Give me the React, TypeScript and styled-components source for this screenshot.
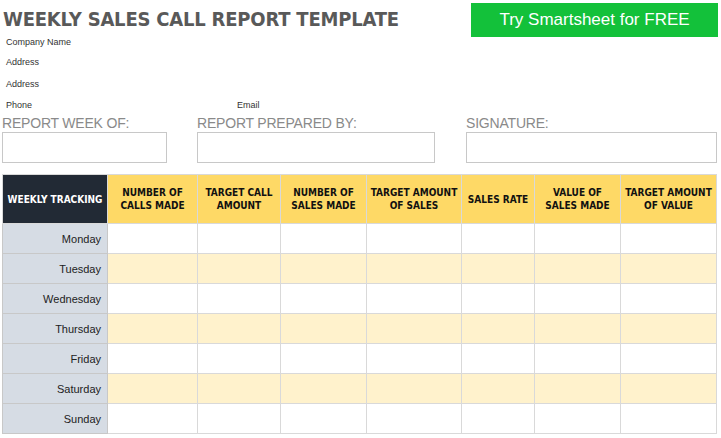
import React from "react";
import styled, { createGlobalStyle } from "styled-components";

const G = createGlobalStyle`
  body { margin: 0; background: #fff; font-family: "DejaVu Sans Condensed", "Liberation Sans", sans-serif; }
`;
const Page = styled.div`width: 721px; height: 438px; position: relative; overflow: hidden;`;
const Top = styled.div`display: flex; justify-content: space-between; padding: 3px 3px 0 3px;`;
const Title = styled.div`font-weight: bold; font-size: 20px; color: #595959; padding-top: 4px; letter-spacing: -0.2px;`;
const Btn = styled.div`
  width: 247px; height: 34px; background: #13c13a; color: #fff; font-family: "Liberation Sans", sans-serif;
  font-size: 17px; display: flex; align-items: center; justify-content: center;
`;
const Info = styled.div`font-family: "Liberation Sans", sans-serif; font-size: 9px; color: #333; height: 9px; margin-left: 6px;`;
const InfoBlock = styled.div`display: flex; flex-direction: column; gap: 11px; padding-top: 1px;`;
const PhoneRow = styled.div`display: flex; font-family: "Liberation Sans", sans-serif; font-size: 9px; color: #333; padding-left: 6px; span:first-child { width: 231px; }`;
const Fields = styled.div`display: flex; margin-top: 5px; padding-left: 2px;`;
const Field = styled.div<{ $w: number; $gap: number }>`width: ${p => p.$w}px; margin-right: ${p => p.$gap}px;`;
const Label = styled.div`font-family: "Liberation Sans", sans-serif; font-size: 14px; color: #8a8a8a; height: 16px; line-height: 16px; letter-spacing: -0.2px;`;
const Box = styled.div`height: 29px; border: 1px solid #c8c8c8; margin-top: 1px;`;
const Table = styled.table`border-collapse: collapse; margin: 11px 0 0 2px; table-layout: fixed;`;
const Th = styled.th<{ $dark?: boolean }>`
  height: 49px; box-sizing: border-box; background: ${p => (p.$dark ? "#222a35" : "#fed966")}; color: ${p => (p.$dark ? "#fff" : "#111")};
  font-size: 10px; font-weight: bold; border: 1px solid #d9d9d9; padding: 0 2px; line-height: 13px; text-align: center;
`;
const Day = styled.td`height: 30px; box-sizing: border-box; padding: 0 6px 0 0; background: #d6dce4; text-align: right; font-family: "Liberation Sans", sans-serif; font-size: 11px; color: #222; border: 1px solid #c8c8c8;`;
const Td = styled.td<{ $alt: boolean }>`padding: 0; background: ${p => (p.$alt ? "#fff2cc" : "#fff")}; border: 1px solid #d9d9d9;`;

const cols = [105, 90, 83, 86, 95, 73, 86, 96];
const heads = ["WEEKLY TRACKING", "NUMBER OF\nCALLS MADE", "TARGET CALL\nAMOUNT", "NUMBER OF\nSALES MADE", "TARGET AMOUNT\nOF SALES", "SALES RATE", "VALUE OF\nSALES MADE", "TARGET AMOUNT\nOF VALUE"];
const days = ["Monday", "Tuesday", "Wednesday", "Thursday", "Friday", "Saturday", "Sunday"];

export default function App() {
  return (
    <Page>
      <G />
      <Top>
        <Title>WEEKLY SALES CALL REPORT TEMPLATE</Title>
        <Btn>Try Smartsheet for FREE</Btn>
      </Top>
      <InfoBlock style={{ marginTop: -1 }}>
        <Info>Company Name</Info>
        <Info>Address</Info>
        <Info style={{ marginTop: 2 }}>Address</Info>
        <PhoneRow style={{ marginTop: 1 }}><span>Phone</span><span>Email</span></PhoneRow>
      </InfoBlock>
      <Fields>
        <Field $w={165} $gap={30}><Label>REPORT WEEK OF:</Label><Box /></Field>
        <Field $w={238} $gap={31}><Label>REPORT PREPARED BY:</Label><Box /></Field>
        <Field $w={251} $gap={0}><Label>SIGNATURE:</Label><Box /></Field>
      </Fields>
      <Table>
        <colgroup>{cols.map((w, i) => <col key={i} style={{ width: w }} />)}</colgroup>
        <thead>
          <tr>{heads.map((h, i) => <Th key={i} $dark={i === 0}>{h.split("\n").map((l, j) => <div key={j}>{l}</div>)}</Th>)}</tr>
        </thead>
        <tbody>
          {days.map((d, r) => (
            <tr key={d}>
              <Day>{d}</Day>
              {cols.slice(1).map((_, c) => <Td key={c} $alt={r % 2 === 1} />)}
            </tr>
          ))}
        </tbody>
      </Table>
    </Page>
  );
}
